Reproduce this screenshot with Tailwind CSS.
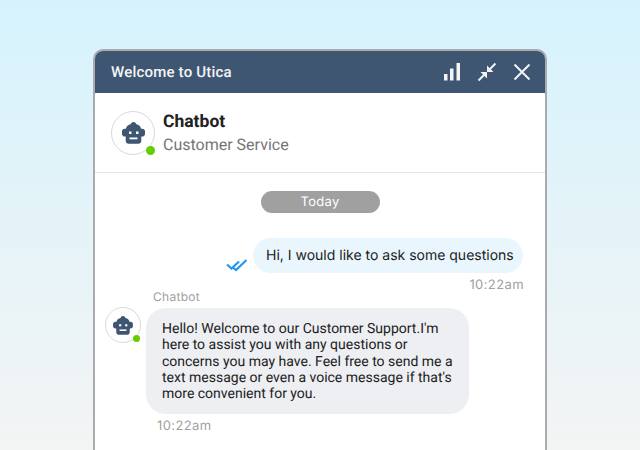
<!doctype html>
<html>
<head>
<meta charset="utf-8">
<script src="https://cdn.jsdelivr.net/npm/@tailwindcss/browser@4"></script>
</head>
<body class="m-0">
<div class="w-[640px] h-[450px] overflow-hidden pt-[49px] pl-[93px] bg-gradient-to-b from-[#d6f3fd] to-[#f3f4f4] font-['Roboto',sans-serif] [text-rendering:geometricPrecision]">
  <div class="w-[454px] h-[420px] bg-white border-2 border-b-0 border-[#a9abae] rounded-t-[10px] overflow-hidden">
    <div class="h-[42px] bg-[#3f5672] flex items-center pl-[16px] pr-[14px] text-white">
      <span class="text-[15px] font-medium tracking-[0.2px] text-[#f2f4f6] flex-1">Welcome to Utica</span>
      <svg class="w-[20px] h-[20px] mr-[13.500px]" viewBox="0 0 20 20" fill="#f2f4f6"><rect x="1" y="12" width="3.500" height="6.500"/><rect x="7" y="6.500" width="3.500" height="12"/><rect x="13.500" y="1" width="3.500" height="17.500"/></svg>
      <svg class="w-[20px] h-[20px] mr-[16.500px]" viewBox="0 0 20 20" fill="none" stroke="#f2f4f6" stroke-width="2"><path d="M1.500 18.500 L7 13 M18.500 1.500 L13 7"/><path d="M3.500 10 H10 V16.500 Z M10 3.500 V10 H16.500 Z" fill="#f2f4f6" stroke="none"/></svg>
      <svg class="w-[18px] h-[18px]" viewBox="0 0 18 18" fill="none" stroke="#f2f4f6" stroke-width="2"><path d="M1.500 1.500 L16.500 16.500 M16.500 1.500 L1.500 16.500"/></svg>
    </div>
    <div class="h-[80px] border-b border-[#e4e5e7] flex items-center pl-[16px]">
      <div class="relative w-[44px] h-[44px] rounded-full border border-[#d9d9d9] flex items-center justify-center">
        <svg class="w-[23px] h-[22px]" viewBox="0 0 23 22" fill="#3f5672"><path d="M11.500 0c1.500 0 2.600 1 2.800 2.300 2.600.3 4.400 2 4.700 4.500h1.300c1.500 0 2.700 1.100 2.700 2.600v2.500c0 1.500-1.200 2.600-2.700 2.600h-1v4.300c0 1.700-1.300 3-3 3H6.700c-1.700 0-3-1.300-3-3v-4.300h-1C1.200 14.500 0 13.400 0 11.900V9.400c0-1.500 1.200-2.600 2.700-2.600H4c.3-2.500 2.100-4.200 4.700-4.500C8.900 1 10 0 11.500 0z"/><rect x="7" y="9.500" width="2.500" height="2.500" fill="#fff"/><rect x="14" y="9.500" width="2.500" height="2.500" fill="#fff"/><rect x="7.500" y="15.500" width="8" height="1.800" fill="#fff"/></svg>
        <span class="absolute right-[-1px] bottom-[-1px] w-[9px] h-[9px] rounded-full bg-[#66cc00]"></span>
      </div>
      <div class="ml-[8px] mt-[0px]">
        <div class="text-[17.500px] leading-[24px] font-bold text-[#212121]">Chatbot</div>
        <div class="text-[16px] leading-[22px] text-[#757575]">Customer Service</div>
      </div>
    </div>
    <div class="flex justify-center pt-[18px]">
      <div class="w-[119px] h-[22px] rounded-full bg-[#a0a0a0] text-white font-['Inter',sans-serif] text-[13px] tracking-[0.3px] leading-[22px] text-center">Today</div>
    </div>
    <div class="flex justify-end items-end mt-[25px] pr-[22px]">
      <svg class="w-[22px] h-[14px] mb-[1px] mr-[5px]" viewBox="0 0 22 14" fill="none" stroke="#2196f3" stroke-width="2.200"><path d="M1 6.500 L5.500 10.500 L13 3.500 M7 9.500 L10 12 L20.500 2"/></svg>
      <div class="h-[35px] w-[270px] rounded-[18px] bg-[#e9f6fd] pl-[13px] font-['Inter',sans-serif] text-[14px] leading-[35px] whitespace-nowrap text-[#212121]">Hi, I would like to ask some questions</div>
    </div>
    <div class="text-right pr-[21px] font-['Inter',sans-serif] text-[13px] leading-[16px] tracking-[0.4px] text-[#a0a0a0] mt-[4px]">10:22am</div>
    <div class="pl-[58px] font-['Inter',sans-serif] text-[12px] leading-[14px] tracking-[0.3px] text-[#a0a0a0] mt-[-3px]">Chatbot</div>
    <div class="flex mt-[3px] pl-[9.500px]">
      <div class="relative w-[36px] h-[36px] rounded-full border border-[#d9d9d9] flex items-center justify-center shrink-0">
        <svg class="w-[20px] h-[19px]" viewBox="0 0 23 22" fill="#3f5672"><path d="M11.500 0c1.500 0 2.600 1 2.800 2.300 2.600.3 4.400 2 4.700 4.500h1.300c1.500 0 2.700 1.100 2.700 2.600v2.500c0 1.500-1.200 2.600-2.700 2.600h-1v4.300c0 1.700-1.300 3-3 3H6.700c-1.700 0-3-1.300-3-3v-4.300h-1C1.200 14.500 0 13.400 0 11.900V9.400c0-1.500 1.200-2.600 2.700-2.600H4c.3-2.500 2.100-4.200 4.700-4.500C8.900 1 10 0 11.500 0z"/><rect x="7" y="9.500" width="2.500" height="2.500" fill="#fff"/><rect x="14" y="9.500" width="2.500" height="2.500" fill="#fff"/><rect x="7.500" y="15.500" width="8" height="1.800" fill="#fff"/></svg>
        <span class="absolute right-[0px] bottom-[0px] w-[7px] h-[7px] rounded-full bg-[#66cc00]"></span>
      </div>
      <div class="ml-[5.500px] mt-[1px] w-[323px] h-[106px] rounded-[20px] bg-[#eeeff3] pl-[16px] pr-0 pt-[13px] text-[14px] leading-[16.250px] whitespace-nowrap text-[#212121]">Hello! Welcome to our Customer Support.I'm<br>here to assist you with any questions or<br>concerns you may have. Feel free to send me a<br>text message or even a voice message if that's<br>more convenient for you.</div>
    </div>
    <div class="pl-[62px] font-['Inter',sans-serif] text-[13px] leading-[16px] tracking-[0.4px] text-[#a0a0a0] mt-[4px]">10:22am</div>
  </div>
</div>
</body>
</html>
